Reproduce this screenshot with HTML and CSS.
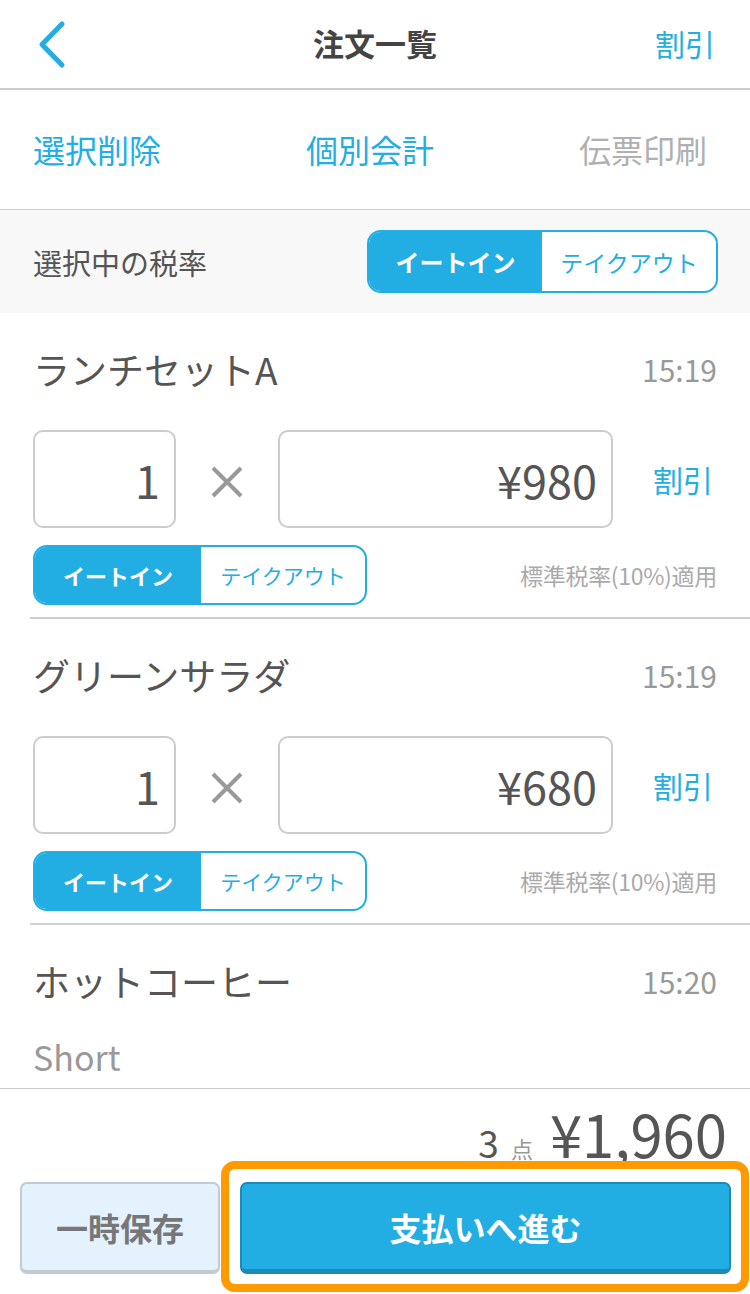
FILE: index.html
```html
<!DOCTYPE html>
<html lang="ja">
<head>
<meta charset="utf-8">
<title>注文一覧</title>
<link rel="stylesheet" href="styles.css">
</head>
<body>
<div class="screen">
  <header class="nav">
    <div class="nav-left">
      <svg class="back" width="30" height="50" viewBox="0 0 30 50"><polyline points="24,4 4,24.5 24,45" fill="none" stroke="#22aee3" stroke-width="5" stroke-linecap="round" stroke-linejoin="round"/></svg>
    </div>
    <div class="nav-title">注文一覧</div>
    <div class="nav-right">割引</div>
  </header>

  <div class="toolbar">
    <span class="tool">選択削除</span>
    <span class="tool">個別会計</span>
    <span class="tool disabled">伝票印刷</span>
  </div>

  <div class="taxbar">
    <span class="taxlabel">選択中の税率</span>
    <div class="seg seg-large">
      <span class="seg-on">イートイン</span>
      <span class="seg-off">テイクアウト</span>
    </div>
  </div>

  <div class="list">
    <div class="item">
      <div class="item-head"><span class="name">ランチセットA</span><span class="time">15:19</span></div>
      <div class="item-inputs">
        <div class="box qty">1</div>
        <span class="times"><svg width="34" height="34" viewBox="0 0 34 34"><path d="M3 3 L31 31 M31 3 L3 31" stroke="#999" stroke-width="4" fill="none"/></svg></span>
        <div class="box price">¥980</div>
        <span class="disc">割引</span>
      </div>
      <div class="item-tax">
        <div class="seg seg-small">
          <span class="seg-on">イートイン</span>
          <span class="seg-off">テイクアウト</span>
        </div>
        <span class="rate">標準税率(10%)適用</span>
      </div>
    </div>
    <div class="item">
      <div class="item-head"><span class="name">グリーンサラダ</span><span class="time">15:19</span></div>
      <div class="item-inputs">
        <div class="box qty">1</div>
        <span class="times"><svg width="34" height="34" viewBox="0 0 34 34"><path d="M3 3 L31 31 M31 3 L3 31" stroke="#999" stroke-width="4" fill="none"/></svg></span>
        <div class="box price">¥680</div>
        <span class="disc">割引</span>
      </div>
      <div class="item-tax">
        <div class="seg seg-small">
          <span class="seg-on">イートイン</span>
          <span class="seg-off">テイクアウト</span>
        </div>
        <span class="rate">標準税率(10%)適用</span>
      </div>
    </div>
    <div class="item">
      <div class="item-head"><span class="name">ホットコーヒー</span><span class="time">15:20</span></div>
      <div class="option">Short</div>
    </div>
  </div>

  <footer class="footer">
    <div class="total">
      <span class="count">3</span><span class="unit">点</span><span class="sum">¥1,960</span>
    </div>
    <div class="actions">
      <button class="btn save">一時保存</button>
      <div class="highlight">
        <button class="btn pay">支払いへ進む</button>
      </div>
    </div>
  </footer>
</div>
</body>
</html>
```

FILE: styles.css
```css
* { box-sizing: border-box; }
html, body { margin: 0; padding: 0; background: #fff; }
body {
  font-family: "Noto Sans CJK JP", "Noto Sans", sans-serif;
  color: #555;
}
.screen { width: 750px; height: 1294px; overflow: hidden; display: flex; flex-direction: column; }

.nav {
  height: 90px;
  border-bottom: 2px solid #cccccc;
  display: grid;
  grid-template-columns: 1fr auto 1fr;
  align-items: center;
}
.nav-left { padding-left: 38px; display: flex; align-items: center; padding-top: 2px; }
.nav-title { font-size: 31px; font-weight: bold; color: #444; margin-top: -3px; }
.nav-right { justify-self: end; padding-right: 35px; font-size: 30px; color: #22aee3; margin-top: -3px; }

.toolbar {
  height: 120px;
  border-bottom: 1px solid #cccccc;
  display: flex;
  align-items: center;
  justify-content: space-between;
  padding: 0 43px 2px 33px;
}
.tool { font-size: 32px; color: #22aee3; }
.tool.disabled { color: #b0b0b0; }

.taxbar {
  height: 103px;
  background: #f8f8f8;
  display: flex;
  align-items: center;
  justify-content: space-between;
  padding: 0 32px 0 33px;
}
.taxlabel { font-size: 29px; color: #555; }

.seg {
  display: flex;
  border: 2px solid #22aee3;
  border-radius: 14px;
  overflow: hidden;
  background: #fff;
}
.seg span { display: flex; align-items: center; justify-content: center; }
.seg-on { background: #22aee3; color: #fff; font-weight: bold; }
.seg-off { color: #22aee3; }
.seg-large { width: 351px; height: 63px; }
.seg-large .seg-on { width: 173px; font-size: 24px; }
.seg-large .seg-off { flex: 1; font-size: 23px; }
.seg-small { width: 334px; height: 60px; }
.seg-small .seg-on { width: 166px; font-size: 22px; }
.seg-small .seg-off { flex: 1; font-size: 21px; }

.list { height: 776px; overflow: hidden; border-bottom: 1px solid #cccccc; }
.item {
  margin-left: 30px;
  padding: 30px 33px 12px 3px;
  border-bottom: 2px solid #d0d0d0;
}
.item-head {
  height: 56px;
  display: flex;
  align-items: center;
  justify-content: space-between;
}
.name { font-size: 37px; color: #555; margin-top: -4px; }
.time { font-size: 30px; color: #999; margin-top: -4px; }

.item-inputs {
  margin-top: 31px;
  display: flex;
  align-items: center;
}
.box {
  height: 98px;
  border: 2px solid #cccccc;
  border-radius: 10px;
  display: flex;
  align-items: center;
  justify-content: flex-end;
  padding-right: 14px;
  font-size: 45px;
  color: #555;
}
.qty { width: 143px; }
.times { width: 102px; display: flex; justify-content: center; align-items: center; padding-top: 6px; }
.price { width: 335px; }
.disc { margin-left: auto; font-size: 30px; color: #22aee3; padding-right: 4px; }

.item-tax {
  margin-top: 17px;
  display: flex;
  align-items: center;
  justify-content: space-between;
}
.rate { font-size: 23px; color: #aaa; letter-spacing: -0.3px; }

.option { margin-top: 26px; height: 40px; line-height: 40px; font-size: 34px; color: #999; }

.footer { flex: 1; display: flex; flex-direction: column; }
.total {
  height: 72px;
  display: flex;
  align-items: baseline;
  justify-content: flex-end;
  padding-right: 23px;
  padding-top: 16px;
  line-height: 56px;
}
.count { font-size: 37px; color: #555; }
.unit { font-size: 22px; color: #999; margin: 0 17px 0 12px; }
.sum { font-size: 58px; color: #555; }

.actions { display: flex; align-items: center; padding-left: 20px; }
.btn {
  font-family: inherit;
  border-radius: 7px;
  height: 92px;
  font-size: 32px;
  font-weight: bold;
  cursor: pointer;
}
.save {
  width: 200px;
  margin-top: 3px;
  background: #e4f2fd;
  color: #777;
  border: 2px solid #c3cbd2;
  border-bottom-width: 4px;
}
.highlight {
  margin-left: 1px;
  width: 528px;
  border: 8px solid #ff9a00;
  border-radius: 14px;
  padding: 13px 10px 10px 11px;
  background: #fff;
}
.pay {
  display: block;
  width: 100%;
  background: #22aee3;
  color: #fff;
  border: 2px solid #1b8ab6;
  border-bottom-width: 5px;
}
```
